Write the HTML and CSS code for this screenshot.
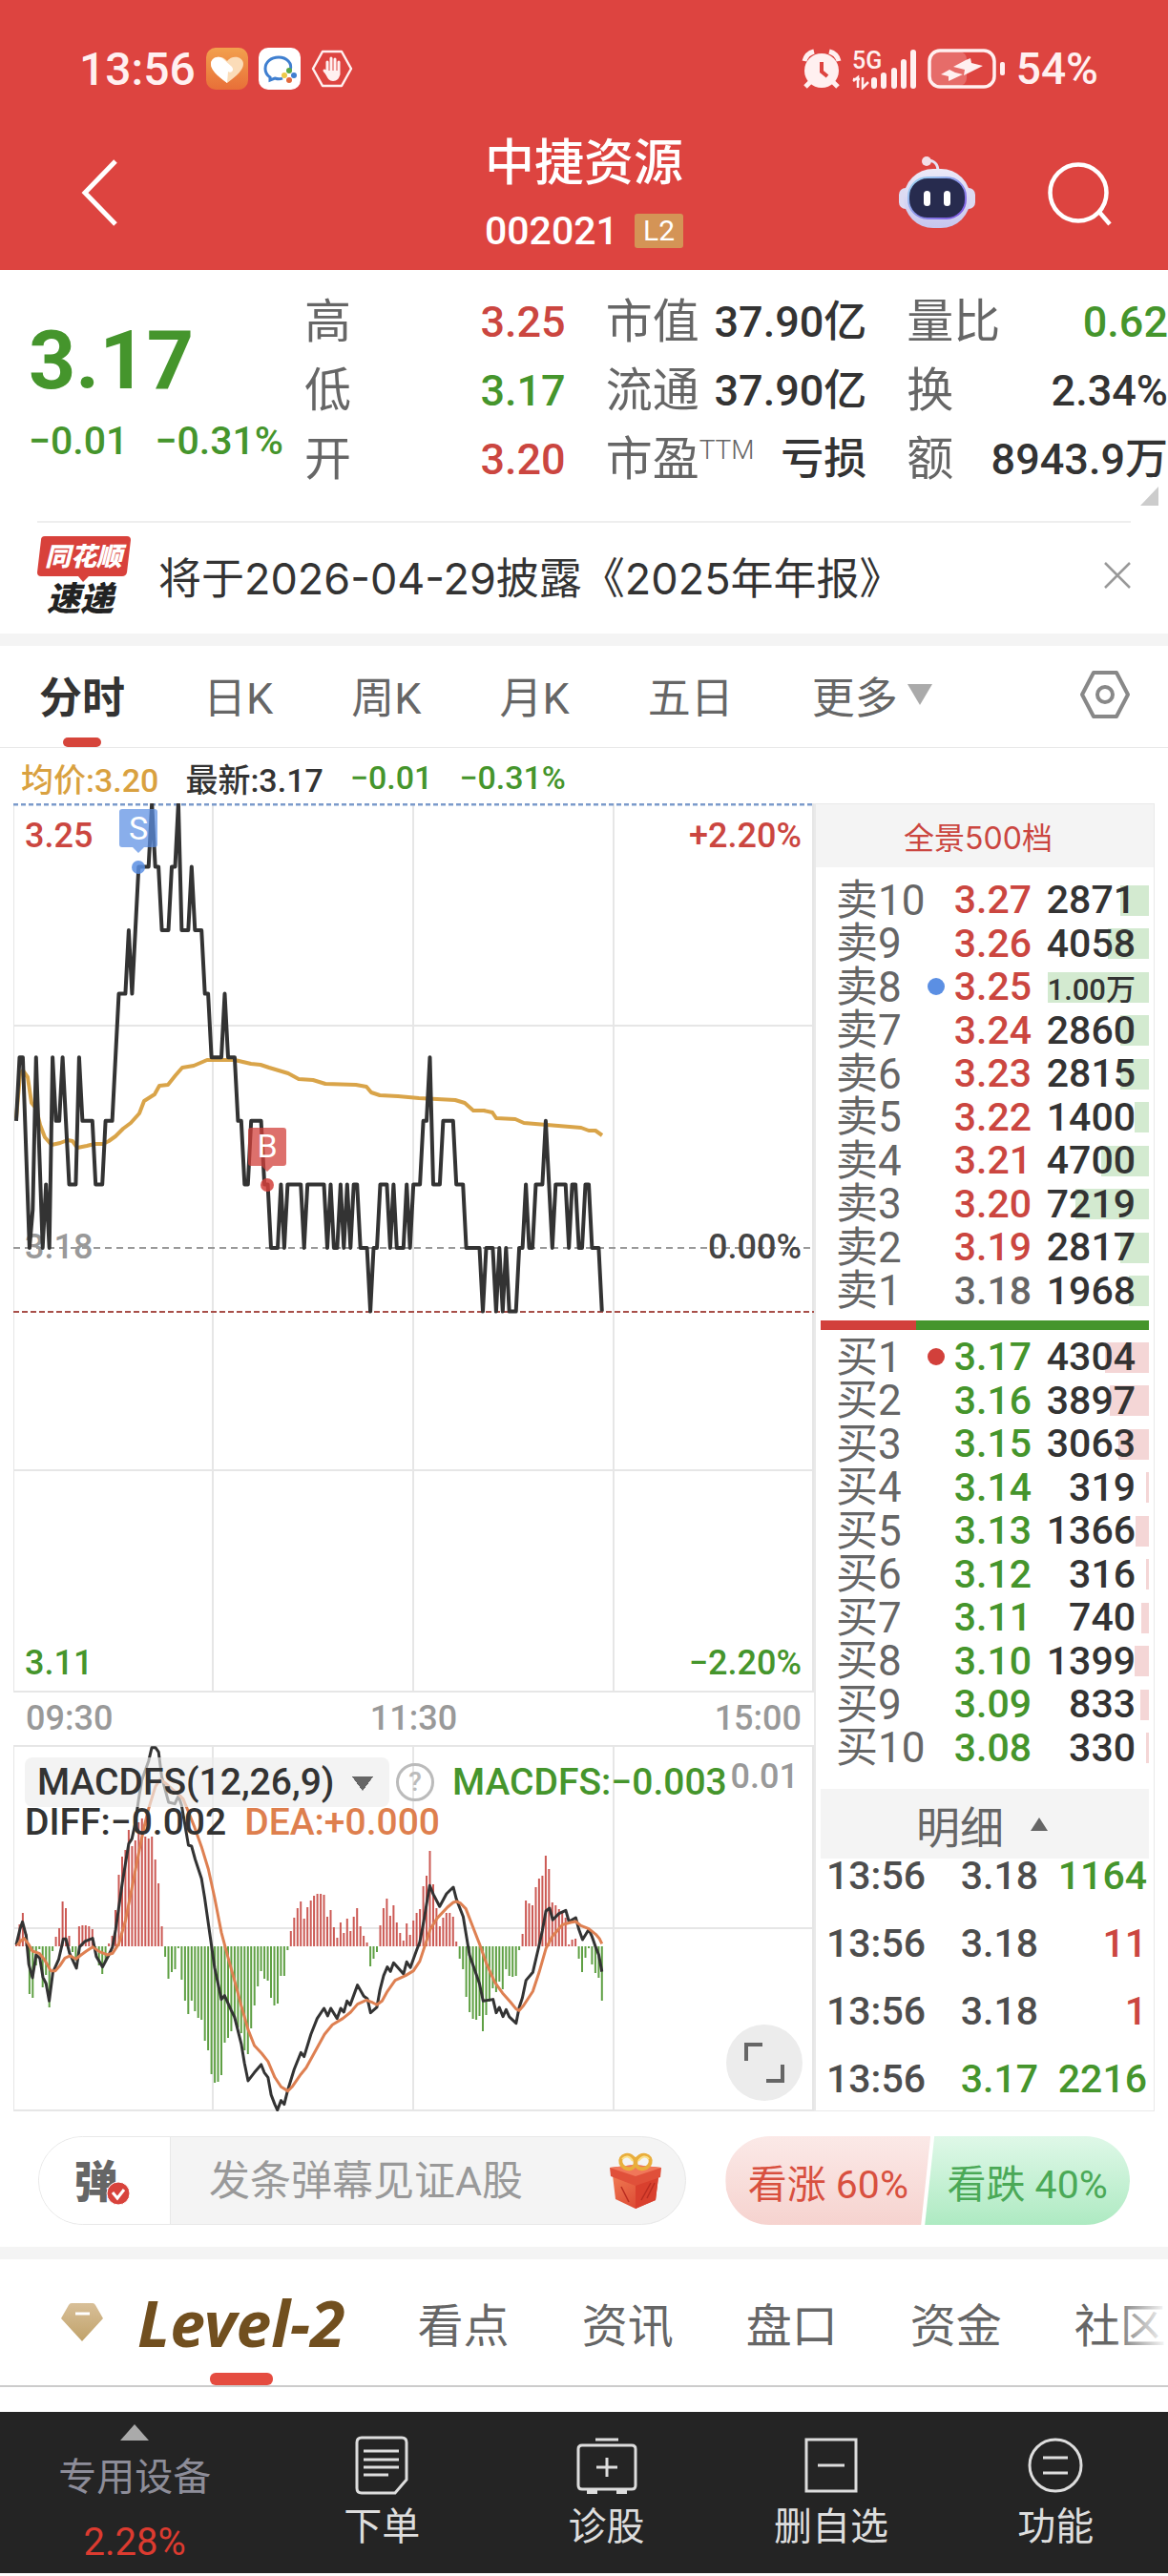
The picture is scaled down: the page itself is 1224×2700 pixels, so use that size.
FILE: index.html
```html
<!DOCTYPE html>
<html lang="zh-CN">
<head>
  <meta charset="UTF-8" />
  <meta name="viewport" content="width=device-width, initial-scale=1.0"/>
  <title>中捷资源 002021</title>
  <link rel="stylesheet" href="styles.css">
</head>
<body>

<header class="header">
  <div class="status">
    <span class="status-time">13:56</span>
    <svg width="44" height="44" viewBox="0 0 44 44">
      <defs><linearGradient id="heartBg" x1="0" y1="0" x2="0" y2="1"><stop offset="0" stop-color="#f2a04e"/><stop offset="1" stop-color="#e86f38"/></linearGradient></defs>
      <rect width="44" height="44" rx="10" fill="url(#heartBg)"/>
      <path d="M22 37C11 29 5 23 5 17c0-8 12-10 17-3 5-7 17-5 17 3 0 6-6 12-17 20z" fill="#fbdcb8"/>
      <path d="M22 37C11 29 5 23 5 17c0-6 7-9 12-6l10 9c3 4-1 7-4 5z" fill="#fff"/>
    </svg>
    <svg width="44" height="44" viewBox="0 0 44 44">
      <rect width="44" height="44" rx="10" fill="#fff"/>
      <path d="M33 24c3-8-4-14-12-14S7 15 7 22c0 4 2 7 5 9v3l5-2c3 1 6 1 8 0" fill="none" stroke="#3f7fd0" stroke-width="3"/>
      <circle cx="32" cy="24" r="3" fill="#5aa845"/><circle cx="37" cy="29" r="3" fill="#3f7fd0"/><circle cx="32" cy="34" r="3" fill="#e2683c"/><circle cx="27" cy="29" r="3" fill="#edc94a"/>
    </svg>
    <svg width="44" height="44" viewBox="0 0 44 44" fill="none" stroke="#fff0f0" stroke-linecap="round">
      <path d="M12 4h20l10 18-10 18H12L2 22z" stroke-width="2.5" stroke-linejoin="round"/>
      <path d="M17 15v12M21 11v14M25 12v14M29 15v13M14 24l5 6" stroke-width="3"/>
      <path d="M16 24h14v4c0 4-3 7-7 7s-6-3-8-8z" fill="#fff0f0" stroke="none"/>
    </svg>
    <span class="spacer"></span>
    <svg width="42" height="42" viewBox="0 0 42 42">
      <circle cx="21" cy="23" r="18" fill="#fff0f0"/>
      <path d="M3 13Q5 5 13 3M29 3q8 2 10 10M9 35l-5 5M33 35l5 5" fill="none" stroke="#fff0f0" stroke-width="5"/>
      <path d="M21 14v10l6 5" fill="none" stroke="#dd4440" stroke-width="4"/>
    </svg>
    <svg width="68" height="44" viewBox="0 0 68 44">
      <text x="0" y="22" font-size="25" font-weight="500" fill="#fff0f0">5G</text>
      <path d="M1 33h7M6 42V31l-5 4M11 31v11l6-6" fill="none" stroke="#fff0f0" stroke-width="2.5"/>
      <path d="M23 34v6M33 29v11M44 24v16M54 15v25M64 5v35" stroke="#fff0f0" stroke-width="6" stroke-linecap="round"/>
    </svg>
    <svg width="82" height="44" viewBox="0 0 82 44">
      <rect x="3" y="4" width="38" height="36" rx="8" fill="#e66c69"/>
      <rect x="2" y="3" width="68" height="38" rx="11" fill="none" stroke="#fff0f0" stroke-width="3.5"/>
      <path d="M40 13l-13 7 12 3-1 6 20-10-12-3-1-5zM23 23l-9 5 8 2v5l15-7-8-2z" fill="#fff0f0"/>
      <rect x="76" y="15" width="5" height="14" rx="2" fill="#fff0f0"/>
    </svg>
    <span class="status-battery">54%</span>
  </div>

  <div class="nav">
    <button class="icon-btn" aria-label="返回">
      <svg width="80" height="80" viewBox="0 0 80 80"><path d="M62 5L30 38l32 33" fill="none" stroke="#fff" stroke-width="5"/></svg>
    </button>
    <div class="nav-title">
      <h1>中捷资源</h1>
      <div class="nav-code">002021 <span class="l2">L2</span></div>
    </div>
    <div class="nav-actions">
      <button class="icon-btn" aria-label="智能助手">
        <svg width="82" height="80" viewBox="0 0 82 80">
          <defs>
            <linearGradient id="robo" x1="0" y1="0" x2="0" y2="1"><stop offset="0" stop-color="#eceaf8"/><stop offset="1" stop-color="#c6c6ee"/></linearGradient>
            <linearGradient id="roboRim" x1="0" y1="0" x2="1" y2="1"><stop offset="0" stop-color="#9fdcf2"/><stop offset="1" stop-color="#7a4ce0"/></linearGradient>
          </defs>
          <path d="M42 16c0-9-4-12-12-12" fill="none" stroke="#e6e2f4" stroke-width="3"/>
          <circle cx="30" cy="5" r="5" fill="#f3dfe8"/>
          <rect x="1" y="33" width="80" height="22" rx="7" fill="#dcdaf2"/>
          <rect x="6" y="13" width="70" height="62" rx="31" fill="url(#robo)"/>
          <rect x="11" y="22" width="60" height="43" rx="20" fill="#272b4e" stroke="url(#roboRim)" stroke-width="2"/>
          <rect x="27" y="36" width="7" height="16" rx="3.5" fill="#fff"/><rect x="48" y="36" width="7" height="16" rx="3.5" fill="#fff"/>
        </svg>
      </button>
      <button class="icon-btn" aria-label="搜索">
        <svg width="68" height="68" viewBox="0 0 68 68" fill="none" stroke="#fff" stroke-width="4.5"><circle cx="33" cy="32" r="29.5"/><path d="M54 51l12 14"/></svg>
      </button>
    </div>
  </div>
</header>

<section class="quote">
  <div class="quote-price">
    <div class="price down">3.17</div>
    <div class="change down"><span>−0.01</span><span>−0.31%</span></div>
  </div>
  <dl class="stats">
    <div><dt>高</dt><dd class="up">3.25</dd></div>
    <div><dt>市值</dt><dd>37.90亿</dd></div>
    <div><dt>量比</dt><dd class="down">0.62</dd></div>
    <div><dt>低</dt><dd class="down">3.17</dd></div>
    <div><dt>流通</dt><dd>37.90亿</dd></div>
    <div><dt>换</dt><dd>2.34%</dd></div>
    <div><dt>开</dt><dd class="up">3.20</dd></div>
    <div><dt>市盈<sup>TTM</sup></dt><dd>亏损</dd></div>
    <div><dt>额</dt><dd>8943.9万</dd></div>
  </dl>
</section>

<section class="news">
  <svg width="98" height="82" viewBox="0 0 98 82">
    <path d="M8 0h86q4 0 4 4l-4 34q-1 4-5 4H54l-6 6-5-6H4q-4 0-4-4L4 4q0-4 4-4z" fill="#d8413b"/>
    <text class="logo-text" x="8" y="31" font-size="27" fill="#fff">同花顺</text>
    <text class="logo-text" x="10" y="78" font-size="35" fill="#222">速递</text>
  </svg>
  <a href="#report">将于2026-04-29披露《2025年年报》</a>
  <button class="icon-btn" aria-label="关闭">
    <svg width="28" height="28" viewBox="0 0 28 28"><path d="M1 1l26 26M27 1L1 27" stroke="#999" stroke-width="2.5"/></svg>
  </button>
</section>

<nav class="periods">
  <button class="active">分时</button>
  <button>日K</button>
  <button>周K</button>
  <button>月K</button>
  <button>五日</button>
  <button class="more">更多<svg width="26" height="22" viewBox="0 0 26 22"><path d="M0 0h26L13 22z" fill="#aaa"/></svg></button>
  <button class="settings" aria-label="设置">
    <svg width="54" height="52" viewBox="0 0 54 52" fill="none" stroke="#888" stroke-width="4"><path d="M15 3h24l12 23-12 23H15L3 26z" stroke-linejoin="round"/><circle cx="27" cy="26" r="8"/></svg>
  </button>
</nav>

<div class="legend">
  <span class="avg">均价:3.20</span>
  <span>最新:3.17</span>
  <span class="down">−0.01</span>
  <span class="down">−0.31%</span>
</div>

<main class="board">
  <div class="charts">
    <svg class="chart" viewBox="0 0 839 932">
      <path class="grid" d="M0 0V932M209 0V932M419 0V932M629 0V932M838 0V932M0 233H839M0 699H839M0 931H839"/>
      <path d="M0 1H839" stroke="#7c9bcb" stroke-width="3" stroke-dasharray="5 3"/>
      <path d="M0 466H839" stroke="#999" stroke-width="2" stroke-dasharray="7 5"/>
      <path d="M0 533H839" stroke="#a8504a" stroke-width="2" stroke-dasharray="6 3"/>
      <text x="12" y="477" fill="#999">3.18</text>
      <polyline class="line-avg" points="3,330 7,284 10,280 15,287 19,314 24,320 28,337 33,350 40,358 49,356 57,353 62,354 67,361 77,359 85,357 94,357 100,354 107,349 115,341 123,335 132,325 137,312 148,305 153,296 162,295 170,285 177,277 189,275 203,269 232,269 249,273 259,274 268,277 288,283 299,289 314,290 327,294 359,295 370,297 375,303 384,306 403,307 425,309 463,311 473,314 482,322 493,322 502,324 506,330 526,331 535,335 559,337 595,340 603,343 610,343 617,348"/>
      <polyline class="line-price" id="priceLine"/>
      <g fill="#5b8fe3">
        <path d="M114 6h34q3 0 3 3v34q0 3-3 3h-11l-6 6-6-6h-11q-3 0-3-3V9q0-3 3-3z" opacity=".72"/>
        <circle cx="131" cy="67" r="7" opacity=".85"/>
      </g>
      <g fill="#d2403b">
        <path d="M249 340h34q3 0 3 3v34q0 3-3 3h-11l-6 6-6-6h-11q-3 0-3-3v-34q0-3 3-3z" opacity=".75"/>
        <circle cx="266" cy="400" r="7" opacity=".85"/>
      </g>
      <text class="mark" x="131" y="38">S</text>
      <text class="mark" x="266" y="371">B</text>
      <text x="12" y="46" fill="#cb4640">3.25</text>
      <text x="826" y="46" fill="#cb4640" text-anchor="end">+2.20%</text>
      <text x="826" y="477" fill="#444" text-anchor="end">0.00%</text>
      <text x="12" y="913" fill="#45952c">3.11</text>
      <text x="826" y="913" fill="#45952c" text-anchor="end">−2.20%</text>
    </svg>
    <div class="axis"><span>09:30</span><span>11:30</span><span>15:00</span></div>
    <div class="macd">
      <svg class="chart" viewBox="0 0 839 384">
        <path class="grid" d="M0 0V384M209 0V384M419 0V384M629 0V384M838 0V384M0 1H839M0 192H839M0 383H839"/>
        <path id="barsUp" stroke="#cc5a55" stroke-width="2"/>
        <path id="barsDown" stroke="#5fa044" stroke-width="2"/>
        <g transform="translate(-14 -90) scale(.5485 .3333)">
          <polyline class="line-diff" points="31,898 38,850 43,826 50,870 55,960 62,1002 69,930 76,940 82,1000 88,1020 94,1075 101,985 112,945 121,880 126,880 133,925 146,972 152,905 162,888 177,878 184,935 196,968 208,930 215,905 221,850 234,700 246,580 252,565 258,520 265,440 271,380 284,320 290,278 297,278 303,292 309,370 322,450 334,455 341,430 347,460 360,585 366,588 373,630 385,690 391,750 404,900 410,970 423,1070 429,1058 442,1105 448,1125 461,1210 467,1270 474,1326 486,1300 499,1275 505,1300 512,1315 518,1370 525,1400 530,1418 537,1388 543,1400 549,1360 562,1290 575,1237 581,1250 594,1180 606,1130 619,1098 626,1122 632,1098 644,1130 651,1098 657,1110 663,1075 669,1088 683,1025 695,1060 702,1068 708,1112 720,1095 726,1040 733,995 740,968 746,982 752,955 771,990 777,952 784,970 796,915 802,890 809,830 815,770 821,712 828,740 840,778 853,738 866,717 872,755 885,810 891,870 897,930 916,1020 923,1075 942,1070 948,1112 954,1095 961,1124 967,1102 973,1125 986,1145 992,1095 998,1065 1005,1010 1018,985 1030,900 1036,855 1043,792 1050,783 1056,820 1068,800 1081,790 1087,825 1100,813 1106,850 1113,882 1125,850 1131,872 1138,905 1144,930 1150,983"/>
          <polyline class="line-dea" points="33,900 40,885 46,878 54,895 62,918 75,925 85,945 97,980 106,980 114,965 124,940 134,933 145,943 155,930 165,918 177,905 190,920 205,930 215,925 227,895 240,820 252,720 265,610 275,530 284,470 297,400 306,378 316,390 330,410 341,425 350,440 360,480 372,530 385,590 398,660 410,750 423,860 436,940 448,1010 461,1090 474,1165 486,1215 500,1240 512,1265 525,1315 537,1345 550,1358 558,1345 575,1305 585,1285 600,1240 620,1180 635,1150 655,1130 670,1110 683,1085 700,1072 712,1080 720,1087 730,1075 740,1045 755,1010 775,995 790,980 802,950 812,900 822,850 835,815 855,780 866,765 872,762 880,768 890,785 903,840 916,895 930,960 945,1015 960,1050 975,1078 986,1100 992,1105 1000,1090 1018,1045 1030,985 1043,910 1056,870 1075,835 1090,828 1100,825 1110,838 1125,848 1138,865 1145,878 1150,895"/>
        </g>
      </svg>
      <div class="macd-info">
        <div class="macd-row">
          <select class="indicator" aria-label="指标"><option>MACDFS(12,26,9)</option></select>
          <button class="help" aria-label="说明">?</button>
          <span class="down">MACDFS:−0.003</span>
          <span class="macd-max">0.01</span>
        </div>
        <div class="macd-row second">
          <span>DIFF:−0.002</span>
          <span class="dea">DEA:+0.000</span>
        </div>
      </div>
      <button class="expand" aria-label="全屏">
        <svg width="44" height="44" viewBox="0 0 44 44" fill="none" stroke="#666" stroke-width="4"><path d="M3 20V3h17M41 24v17H24"/></svg>
      </button>
    </div>
  </div>

  <aside class="book">
    <button class="book-full">全景500档</button>
    <table class="levels sell"><tbody id="sell"></tbody></table>
    <div class="ratio"><i></i></div>
    <table class="levels buy"><tbody id="buy"></tbody></table>
    <button class="detail">明细<svg width="18" height="14" viewBox="0 0 18 14"><path d="M9 0l9 14H0z" fill="#666"/></svg></button>
    <table class="trades">
      <tbody>
        <tr><td>13:56</td><td>3.18</td><td class="down">1164</td></tr>
        <tr><td>13:56</td><td>3.18</td><td class="up">11</td></tr>
        <tr><td>13:56</td><td>3.18</td><td class="up">1</td></tr>
        <tr><td>13:56</td><td class="down">3.17</td><td class="down">2216</td></tr>
      </tbody>
    </table>
  </aside>
</main>

<section class="barrage">
  <div class="barrage-box">
    <button class="barrage-toggle" aria-label="弹幕开关">弹
      <svg width="26" height="26" viewBox="0 0 26 26"><circle cx="13" cy="13" r="12" fill="#d8433c" stroke="#fff" stroke-width="1"/><path d="M7 12l5 6 7-9" fill="none" stroke="#fff" stroke-width="3"/></svg>
    </button>
    <input type="text" placeholder="发条弹幕见证A股" aria-label="弹幕">
    <button class="icon-btn gift" aria-label="礼物">
      <svg width="56" height="60" viewBox="0 0 56 60">
        <defs><linearGradient id="box" x1="0" y1="0" x2="1" y2="1"><stop offset="0" stop-color="#f07a52"/><stop offset="1" stop-color="#d63a2a"/></linearGradient></defs>
        <path d="M4 24l24 10 24-8-3 24-21 9L7 49z" fill="url(#box)"/>
        <path d="M28 34v25l21-9 3-24z" fill="#d9402e"/>
        <path d="M1 16l26-3 28 3-1 10-26 9L2 25z" fill="#e0503a"/>
        <path d="M1 16l26-3 28 3-27 9z" fill="#f0775a"/>
        <path d="M34 50l10-18M40 48l8-16M13 36l8 16" stroke="#b92c20" stroke-width="1.5"/>
        <g fill="none" stroke="#e9ae3c" stroke-width="4"><ellipse cx="20" cy="10" rx="8" ry="7" transform="rotate(30 20 10)"/><ellipse cx="36" cy="10" rx="8" ry="7" transform="rotate(-30 36 10)"/></g>
        <path d="M14 7q6-6 11 2M31 9q6-8 11-2" fill="none" stroke="#fbe08a" stroke-width="2"/>
      </svg>
    </button>
  </div>
  <div class="vote">
    <button class="vote-up">看涨 60%</button>
    <button class="vote-down">看跌 40%</button>
  </div>
</section>

<nav class="tabs">
  <a href="#level2" class="active">
    <svg width="44" height="42" viewBox="0 0 44 42"><defs><linearGradient id="gem" x1="0" y1="0" x2="0" y2="1"><stop offset="0" stop-color="#d8bf98"/><stop offset="1" stop-color="#c0a26a"/></linearGradient></defs><path d="M11 1h22q2 0 3 2l8 14-22 24L0 17 8 3q1-2 3-2z" fill="url(#gem)"/><path d="M15 12h15" stroke="#fff" stroke-width="3"/></svg>
    <span>Level-2</span>
  </a>
  <a href="#views">看点</a>
  <a href="#info">资讯</a>
  <a href="#depth">盘口</a>
  <a href="#funds">资金</a>
  <a href="#community">社区</a>
</nav>

<footer class="toolbar">
  <a href="#sector" class="sector">
    <svg width="30" height="17" viewBox="0 0 30 17"><path d="M15 0l15 17H0z" fill="#aaa"/></svg>
    <span>专用设备</span>
    <strong>2.28%</strong>
  </a>
  <a href="#order">
    <svg width="56" height="62" viewBox="0 0 56 62"><path d="M7 2h42q5 0 5 5v39L42 60H7q-5 0-5-5V7q0-5 5-5zM9 16h37M9 25h37M9 33h37M9 41h26"/></svg>
    <span>下单</span>
  </a>
  <a href="#diagnose">
    <svg width="64" height="62" viewBox="0 0 64 62"><path d="M6 10h52q4 0 4 4v38q0 4-4 4H6q-4 0-4-4V14q0-4 4-4zM20 4h24M32 23v20M21 33h22"/><path d="M11 59h11M42 59h11" stroke-width="4"/></svg>
    <span>诊股</span>
  </a>
  <a href="#remove">
    <svg width="56" height="62" viewBox="0 0 56 62"><path d="M2 4h52v54H2zM14 31h28"/></svg>
    <span>删自选</span>
  </a>
  <a href="#more">
    <svg width="58" height="62" viewBox="0 0 58 62"><circle cx="29" cy="31" r="27"/><path d="M16 23h26M16 39h26"/></svg>
    <span>功能</span>
  </a>
</footer>

<script>
// [minute, price in cents above 3.00]
const prices = [[0,20],[1,21],[2,21],[4,18],[5,18.6],[6,21],[8,18],[9,19],[10,18],[11,21],[12,20],[13,20],[14,21],[16,19],[18,19],[19,21],[20,20],[23,20],[24,19],[26,19],[27,20],[29,20],[31,22],[33,22],[34,23],[35,22],[37,24],[40,24],[41,25],[42,24],[43,24],[44,23],[46,23],[47,24],[48,24],[49,25],[50,23],[52,23],[53,24],[54,23],[56,23],[57,22],[58,22],[59,21],[62,21],[63,22],[64,21],[66,21],[67,20],[68,20],[69,19],[70,19],[71,20],[74,20],[75,19],[76,19],[77,18],[79,18],[80,19],[81,18],[82,19],[86,19],[87,18],[88,19],[93,19],[94,18],[95,19],[96,18],[97,18],[98,19],[99,18],[100,19],[101,18],[102,19],[103,19],[104,18],[106,18],[107,17],[108,18],[109,18],[110,19],[112,19],[113,18],[114,19],[115,18],[117,18],[118,19],[119,18],[120,19],[122,19],[123,20],[124,20],[125,21],[126,19],[128,19],[129,20],[132,20],[133,19],[135,19],[136,18],[140,18],[141,17],[142,18],[144,18],[145,17],[146,18],[147,17],[148,18],[149,17],[151,17],[152,18],[153,18],[154,19],[155,18],[156,18],[157,19],[159,19],[160,20],[162,18],[163,19],[166,19],[167,18],[168,19],[169,19],[170,18],[171,18],[172,19],[173,19],[174,18],[176,18],[177,17]];

// one MACD bar per minute
const bars = [2,23,35,13,-50,-54,-20,-3,-43,-30,-64,-5,10,19,47,40,11,-6,-15,21,22,22,21,18,-6,-20,-29,-15,3,11,38,75,94,101,122,105,111,130,134,115,113,115,91,66,21,-11,-34,-27,-24,-2,-35,-57,-71,-57,-68,-75,-77,-99,-109,-134,-143,-142,-135,-101,-96,-89,-76,-85,-91,-109,-113,-86,-62,-42,-26,-34,-36,-54,-62,-60,-31,-31,-4,16,30,40,47,29,41,48,53,55,55,54,31,38,20,9,25,14,29,16,31,40,21,11,4,-21,-13,-6,22,40,50,32,43,25,14,6,24,12,27,35,39,63,74,100,65,40,21,30,35,35,31,5,-13,-24,-53,-69,-76,-77,-73,-89,-72,-58,-44,-48,-37,-45,-24,-31,-32,-31,-4,13,48,45,43,62,71,74,95,81,46,43,39,36,30,2,7,8,-13,-27,-12,-2,-19,-28,-33,-57];

const STEP = 3.468;
const minuteX = m => (3 + m * STEP).toFixed(1);

document.getElementById("priceLine").setAttribute("points",
  prices.map(([m, c]) => minuteX(m) + "," + (466 - (c - 18) * 66.6).toFixed(1)).join(" "));

const barPath = up => bars.map((v, m) => (v > 0) === up ? `M${minuteX(m)} 211v${-v}` : "").join("");
document.getElementById("barsUp").setAttribute("d", barPath(true));
document.getElementById("barsDown").setAttribute("d", barPath(false));

const sell = [2871, 4058, 10000, 2860, 2815, 1400, 4700, 7219, 2817, 1968];
const buy = [4304, 3897, 3063, 319, 1366, 316, 740, 1399, 833, 330];

function levelRow(name, cents, volume, dot) {
  const cls = cents > 318 ? "up" : cents < 318 ? "down" : "flat";
  const text = volume >= 10000 ? `<small>${(volume / 10000).toFixed(2)}万</small>` : volume;
  return `<tr><th scope="row">${name}</th>` +
    `<td class="${cls}">${dot ? `<i class="dot ${dot}"></i>` : ""}${(cents / 100).toFixed(2)}</td>` +
    `<td class="vol" style="--w:${Math.round(volume * 106 / 10000)}px">${text}</td></tr>`;
}
document.getElementById("sell").innerHTML =
  sell.map((v, i) => levelRow("卖" + (10 - i), 327 - i, v, i === 2 && "blue")).join("");
document.getElementById("buy").innerHTML =
  buy.map((v, i) => levelRow("买" + (i + 1), 317 - i, v, i === 0 && "red")).join("");
</script>

</body>
</html>
```
FILE: styles.css
```css
:root {
  --red: #cb4640;
  --green: #45952c;
  --brand: #dd4440;
  --text: #333;
  --text-soft: #666;
  --line: #e9e9e9;
  --panel: #f4f4f4;
}

* {
  margin: 0;
  padding: 0;
  box-sizing: border-box;
}

body {
  font-family: Roboto, "Noto Sans CJK SC", sans-serif;
  background: #fff;
  color: var(--text);
  overflow-x: hidden;
}

button, input, select {
  font: inherit;
  color: inherit;
  background: none;
  border: 0;
  outline: 0;
}

a {
  color: inherit;
  text-decoration: none;
}

svg {
  display: block;
  flex: none;
}

.up { color: var(--red); }
.down { color: var(--green); }
.flat { color: var(--text-soft); }

.icon-btn {
  display: flex;
}

.header {
  background: var(--brand);
  color: #fff;
}

.status {
  display: flex;
  align-items: center;
  gap: 11px;
  height: 137px;
  padding: 7px 73px 0 83px;
  font-size: 48px;
  font-weight: 500;
  color: #fff0f0;
}

.status-battery {
  font-size: 46px;
}

.spacer {
  flex: 1;
}

.nav {
  display: grid;
  grid-template-columns: 1fr auto 1fr;
  align-items: center;
  height: 146px;
  padding: 0 59px 12px;
}

.nav-title h1 {
  font-size: 52px;
  font-weight: 500;
  line-height: 64px;
}

.nav-code {
  display: flex;
  align-items: center;
  justify-content: space-between;
  margin-top: 12px;
  font-size: 41px;
  font-weight: 500;
  line-height: 52px;
}

.l2 {
  padding: 0 9px;
  border-radius: 3px;
  background: #d49456;
  font-size: 30px;
  font-weight: 400;
  line-height: 36px;
}

.nav-actions {
  display: flex;
  align-items: center;
  justify-content: flex-end;
  gap: 74px;
}

.quote {
  display: flex;
  height: 263px;
  padding: 19px 0 0 30px;
}

.quote-price {
  flex: 0 0 289px;
}

.price {
  margin-top: 24px;
  font-size: 86px;
  font-weight: 700;
  line-height: 104px;
}

.change {
  display: flex;
  gap: 28px;
  margin-top: 8px;
  font-size: 41px;
  font-weight: 500;
  line-height: 48px;
}

.stats {
  flex: 1;
  display: grid;
  grid-template-columns: repeat(3, 1fr);
  grid-auto-rows: 72px;
  column-gap: 42px;
  position: relative;
}

.stats::after {
  content: "";
  position: absolute;
  right: 10px;
  bottom: 16px;
  border-left: 19px solid transparent;
  border-bottom: 20px solid #ccc;
}

.stats div {
  display: flex;
  align-items: center;
  justify-content: space-between;
  white-space: nowrap;
}

.stats dt {
  color: var(--text-soft);
  font-size: 49px;
  line-height: 72px;
}

.stats sup {
  font-size: 28px;
  font-weight: 300;
  line-height: 1;
}

.stats dd {
  font-size: 45px;
  font-weight: 500;
  line-height: 72px;
}

.news {
  display: flex;
  align-items: center;
  gap: 29px;
  height: 118px;
  margin: 0 39px;
  padding-bottom: 6px;
  border-top: 2px solid #eee;
}

.news svg {
  overflow: visible;
}

.news a {
  flex: 1;
  font-family: Inter, "Noto Sans CJK SC", sans-serif;
  font-size: 45px;
}

.logo-text {
  font-family: "Noto Sans CJK SC", sans-serif;
  font-weight: 900;
  font-style: italic;
}

.periods {
  display: flex;
  gap: 82px;
  height: 120px;
  padding: 0 39px 0 41px;
  border-top: 13px solid var(--panel);
  border-bottom: 1px solid var(--line);
  font-size: 45px;
  color: var(--text-soft);
}

.periods button {
  display: flex;
  align-items: center;
  gap: 10px;
  padding-bottom: 4px;
}

.periods .active {
  position: relative;
  color: var(--text);
  font-weight: 700;
}

.periods .active::after {
  content: "";
  position: absolute;
  left: 50%;
  bottom: 0;
  width: 40px;
  height: 10px;
  margin-left: -20px;
  border-radius: 5px;
  background: #d6453b;
}

.periods .settings {
  margin-left: auto;
}

.legend {
  display: flex;
  align-items: center;
  gap: 28px;
  height: 58px;
  padding: 4px 22px 0;
  font-size: 34px;
  font-weight: 500;
}

.legend .avg {
  color: #d9a140;
}

.board {
  display: grid;
  grid-template-columns: 839fr 357fr;
  padding: 0 14px;
}

.chart {
  width: 100%;
  height: auto;
  font-size: 36px;
  font-weight: 500;
}

.chart polyline {
  fill: none;
  stroke-linejoin: round;
  vector-effect: non-scaling-stroke;
}

.grid { stroke: #e6e6e6; stroke-width: 2; }
.line-avg { stroke: #d9a449; stroke-width: 4; }
.line-price { stroke: #333; stroke-width: 4; }
.line-diff { stroke: #333; stroke-width: 3; }
.line-dea { stroke: #de8052; stroke-width: 3; }

.mark {
  fill: #fff;
  font-size: 34px;
  font-weight: 400;
  text-anchor: middle;
}

.axis {
  display: flex;
  justify-content: space-between;
  padding: 0 13px;
  font-size: 36px;
  font-weight: 500;
  line-height: 55px;
  color: #999;
}

.macd {
  position: relative;
}

.macd-info {
  position: absolute;
  top: 13px;
  left: 12px;
  right: 16px;
  font-size: 39px;
  font-weight: 500;
  white-space: nowrap;
}

.macd-row {
  display: flex;
  align-items: center;
  height: 52px;
  line-height: 52px;
}

.macd-row.second {
  height: 32px;
  gap: 19px;
}

.indicator {
  appearance: none;
  width: 382px;
  height: 52px;
  padding-left: 13px;
  border-radius: 8px;
  background:
    linear-gradient(to bottom right, #666 50%, transparent 51%) 354px 20px / 11px 15px no-repeat,
    linear-gradient(to bottom left, #666 50%, transparent 51%) 343px 20px / 11px 15px no-repeat,
    rgba(236, 236, 236, 0.65);
}

.help {
  flex: none;
  width: 40px;
  height: 40px;
  margin: 0 19px 0 7px;
  border: 3px solid #bbb;
  border-radius: 50%;
  color: #bbb;
  font-size: 28px;
  line-height: 34px;
}

.macd-max {
  margin-left: auto;
  font-size: 36px;
  line-height: 40px;
  align-self: flex-start;
  color: #999;
}

.dea {
  color: #de7f4e;
}

.expand {
  position: absolute;
  right: 12px;
  bottom: 11px;
  display: flex;
  align-items: center;
  justify-content: center;
  width: 80px;
  height: 80px;
  border-radius: 50%;
  background: #ececec;
}

.book {
  display: flex;
  flex-direction: column;
  border: 1px solid var(--line);
  border-left-width: 2px;
}

.book-full {
  height: 66px;
  padding-right: 14px;
  background: var(--panel);
  color: var(--red);
  font-family: Inter, "Noto Sans CJK SC", sans-serif;
  font-size: 32px;
}

.levels, .trades {
  margin: 0 5px;
  border-collapse: collapse;
  table-layout: fixed;
  font-size: 41px;
  font-weight: 500;
  line-height: 1;
}

.levels {
  height: 455px;
}

.levels.sell {
  margin-top: 12px;
}

.levels th {
  width: 33%;
  padding-left: 16px;
  color: var(--text-soft);
  font-size: 44px;
  font-weight: 400;
  line-height: 44px;
  text-align: left;
  white-space: nowrap;
}

.levels td {
  width: 35%;
  padding-right: 14px;
  text-align: right;
  white-space: nowrap;
}

.levels .vol {
  width: 32%;
  background: linear-gradient(var(--bar), var(--bar)) right center / var(--w) 32px no-repeat;
}

.levels small {
  font-size: 31px;
}

.sell { --bar: #d3ead0; }
.buy { --bar: #f4d6d6; }

.dot {
  display: inline-block;
  width: 18px;
  height: 18px;
  margin-right: 10px;
  border-radius: 50%;
  vertical-align: 5px;
}

.dot.blue { background: #5b8fe3; }
.dot.red { background: #d2403b; }

.ratio {
  height: 10px;
  margin: 8px 5px 6px;
  background: #45952c;
}

.ratio i {
  display: block;
  width: 29%;
  height: 100%;
  background: #d2403b;
}

.detail {
  display: flex;
  align-items: center;
  justify-content: center;
  gap: 28px;
  height: 73px;
  margin: 20px 5px 0;
  padding-right: 6px;
  background: var(--panel);
  color: var(--text-soft);
  font-size: 46px;
}

.trades {
  color: #4d4d4d;
}

.trades td {
  height: 71px;
  padding: 0 7px 35px 0;
  line-height: 36px;
  text-align: right;
}

.trades td:first-child {
  padding-left: 6px;
  text-align: left;
}

.trades td:last-child {
  padding-right: 2px;
}

.trades tr:last-child td {
  height: 48px;
  padding-bottom: 12px;
}

.barrage {
  display: flex;
  gap: 41px;
  padding: 26px 40px 23px;
}

.barrage-box {
  flex: 678;
  display: flex;
  align-items: center;
  height: 93px;
  border: 1px solid #e8e8e8;
  border-radius: 47px;
  background: var(--panel);
  overflow: hidden;
}

.barrage-toggle {
  position: relative;
  flex: 0 0 138px;
  height: 93px;
  padding: 0 18px 6px 0;
  border-right: 1px solid #e8e8e8;
  background: #fff;
  font-size: 46px;
  font-weight: 900;
  color: var(--text-soft);
}

.barrage-toggle svg {
  position: absolute;
  left: 70px;
  top: 47px;
}

.barrage-box input {
  flex: 1;
  min-width: 0;
  padding-left: 40px;
  font-size: 43px;
}

.barrage-box input::placeholder {
  color: #999;
}

.gift {
  margin-right: 24px;
}

.vote {
  flex: 424;
  display: flex;
  border-radius: 47px;
  overflow: hidden;
  font-size: 41px;
}

.vote button {
  flex: 1;
  white-space: nowrap;
}

.vote-up {
  clip-path: polygon(0 0, 100% 0, calc(100% - 10px) 100%, 0 100%);
  margin-right: -3px;
  background: linear-gradient(#fbe9e7, #f6d3cf);
  color: #d8503f;
}

.vote-down {
  clip-path: polygon(10px 0, 100% 0, 100% 100%, 0 100%);
  margin-left: -3px;
  background: linear-gradient(#dff8e8, #aeeac2);
  color: #4ba957;
}

.tabs {
  position: relative;
  display: flex;
  gap: 76px;
  height: 147px;
  padding-left: 64px;
  border-top: 13px solid var(--panel);
  border-bottom: 2px solid #ccc;
  overflow: hidden;
  font-size: 48px;
  color: var(--text-soft);
}

.tabs::after {
  content: "";
  position: absolute;
  top: 0;
  right: 0;
  width: 60px;
  height: 100%;
  background: linear-gradient(to right, transparent, #fff);
}

.tabs a {
  flex: none;
  display: flex;
  align-items: center;
  gap: 36px;
}

.tabs .active span {
  position: relative;
  font-family: "Noto Sans", sans-serif;
  font-size: 66px;
  font-weight: 700;
  font-style: italic;
  line-height: 132px;
  color: #714f1f;
}

.tabs .active span::after {
  content: "";
  position: absolute;
  left: 50%;
  bottom: 0;
  width: 66px;
  height: 13px;
  margin-left: -33px;
  border-radius: 6px;
  background: #e54c40;
}

.toolbar {
  display: flex;
  min-height: 169px;
  margin-top: 26px;
  background: #242424;
  color: #ddd;
  font-size: 40px;
}

.toolbar a {
  flex: 5;
  display: flex;
  flex-direction: column;
  align-items: center;
  gap: 4px;
  padding-top: 25px;
  line-height: 60px;
}

.toolbar a > svg {
  fill: none;
  stroke: #ddd;
  stroke-width: 3;
}

.toolbar .sector {
  flex: 6;
  gap: 9px;
  padding-top: 13px;
}

.toolbar .sector > svg {
  stroke: none;
}

.toolbar .sector strong {
  font-weight: 400;
  line-height: 58px;
  color: #dc3b30;
}

.toolbar .sector span {
  color: #8d8d99;
}
```
